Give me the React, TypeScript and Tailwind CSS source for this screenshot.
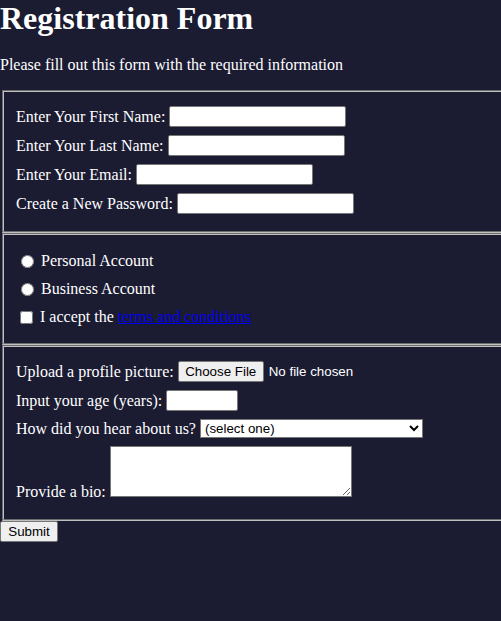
import React from "react";

const inputCls =
  "h-[21px] bg-white text-black border border-[#767676] rounded-[2px] px-[2px] font-['Liberation_Sans',Arial,sans-serif] text-[13.333px] leading-[normal]";

export default function App() {
  return (
    <div className="w-full min-h-screen overflow-hidden bg-[#1b1b32] text-white font-['Liberation_Serif','Times_New_Roman',serif] text-[16px] leading-[normal]">
      <h1 className="text-[32px] font-bold leading-[normal] mb-[19px]">Registration Form</h1>
      <p className="mb-[16px]">Please fill out this form with the required information</p>
      <form className="w-[540px]">
        <fieldset className="mx-[2px] border-2 [border-style:groove] border-[#c0c0c0] pl-[12px] pt-[14px] pb-[17px] flex flex-col gap-[8px]">
          <label className="flex items-center h-[21px] gap-[4px]">
            <span>Enter Your First Name:</span>
            <input type="text" className={`${inputCls} w-[177px]`} />
          </label>
          <label className="flex items-center h-[21px] gap-[4px]">
            <span>Enter Your Last Name:</span>
            <input type="text" className={`${inputCls} w-[177px]`} />
          </label>
          <label className="flex items-center h-[21px] gap-[4px]">
            <span>Enter Your Email:</span>
            <input type="email" className={`${inputCls} w-[177px]`} />
          </label>
          <label className="flex items-center h-[21px] gap-[4px]">
            <span>Create a New Password:</span>
            <input type="password" className={`${inputCls} w-[177px]`} />
          </label>
        </fieldset>
        <fieldset className="mx-[2px] border-2 [border-style:groove] border-[#c0c0c0] pl-[12px] pt-[16px] pb-[16px] flex flex-col gap-[8px]">
          <label className="flex items-center h-[20px]">
            <input type="radio" name="acct" className="w-[13px] h-[13px] ml-[5px] mr-[7px]" />
            <span>Personal Account</span>
          </label>
          <label className="flex items-center h-[20px]">
            <input type="radio" name="acct" className="w-[13px] h-[13px] ml-[5px] mr-[7px]" />
            <span>Business Account</span>
          </label>
          <label className="flex items-center h-[20px]">
            <input type="checkbox" className="w-[13px] h-[13px] ml-[4px] mr-[7px]" />
            <span>
              I accept the{" "}
              <a href="#" className="text-[#0000ee] underline">terms and conditions</a>
            </span>
          </label>
        </fieldset>
        <fieldset className="mx-[2px] border-2 [border-style:groove] border-[#c0c0c0] pl-[12px] pt-[14px] pb-[22px] flex flex-col gap-[8px]">
          <label className="flex items-center h-[21px] gap-[4px]">
            <span>Upload a profile picture:</span>
            <span className="flex items-center gap-[5px] font-['Liberation_Sans',Arial,sans-serif] text-[13.333px]">
              <button type="button" className="h-[21px] w-[86px] bg-[#efefef] text-black border border-[#767676] rounded-[2px]">Choose File</button>
              <span>No file chosen</span>
            </span>
          </label>
          <label className="flex items-center h-[21px] gap-[4px]">
            <span>Input your age (years):</span>
            <input type="number" className={`${inputCls} w-[72px]`} />
          </label>
          <label className="flex items-center h-[19px] gap-[4px]">
            <span>How did you hear about us?</span>
            <select className="h-[19px] w-[223px] bg-white text-black border border-[#767676] font-['Liberation_Sans',Arial,sans-serif] text-[13.333px]">
              <option>(select one)</option>
              <option>freeCodeCamp News</option>
              <option>freeCodeCamp YouTube Channel</option>
              <option>freeCodeCamp Forum</option>
              <option>Other</option>
            </select>
          </label>
          <label className="flex items-end gap-[4px]">
            <span className="mb-[-4px]">Provide a bio:</span>
            <textarea className="w-[242px] h-[51px] bg-white text-black border border-[#767676] font-['Liberation_Mono',monospace] text-[13.333px]" />
          </label>
        </fieldset>
        <button type="submit" className="h-[21px] w-[58px] bg-[#efefef] text-black border border-[#767676] rounded-[2px] font-['Liberation_Sans',Arial,sans-serif] text-[13.333px]">
          Submit
        </button>
      </form>
    </div>
  );
}
